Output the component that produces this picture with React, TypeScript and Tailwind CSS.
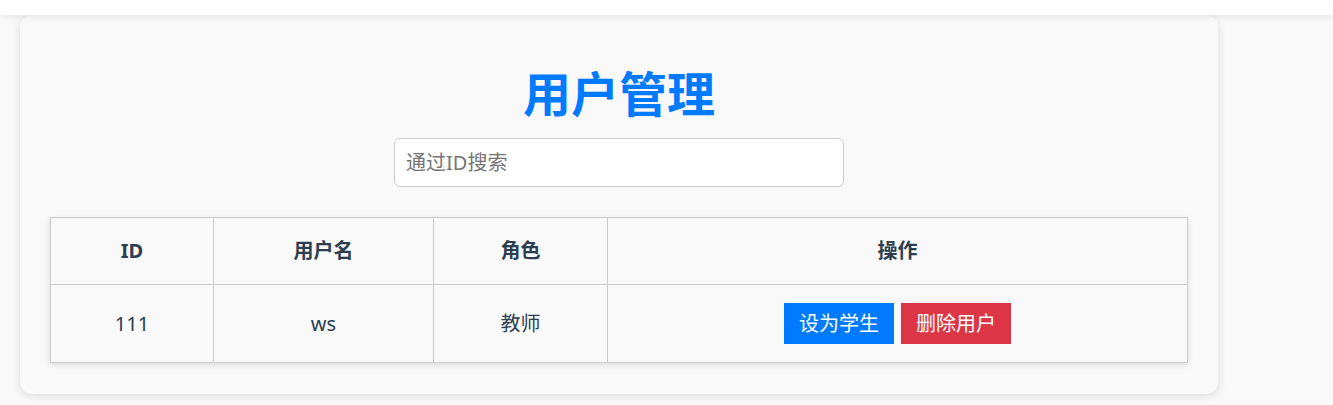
import React from "react";

const users = [{ id: "111", name: "ws", role: "教师" }];

export default function App() {
  return (
    <div
      className="min-h-[405px] bg-[#f9f9f9] text-[#2c3e50]"
      style={{ fontFamily: '"Noto Sans", "Noto Sans CJK SC", sans-serif' }}
    >
      {/* top bar */}
      <div className="relative z-10 h-[15px] bg-white shadow-[0_2px_6px_rgba(0,0,0,0.08)]" />

      {/* card */}
      <div className="ml-[20px] w-[1198px] rounded-[12px] bg-[#f9f9f9] px-[30px] pb-[31px] pt-[51px] shadow-[0_2px_10px_rgba(0,0,0,0.12)]">
        <h1 className="text-center text-[48px] font-bold leading-[56px] text-[#007bff]">
          用户管理
        </h1>

        <div className="mt-[16px] flex justify-center">
          <input
            type="text"
            placeholder="通过ID搜索"
            className="h-[49px] w-[450px] rounded-[6px] border border-[#ccc] bg-white px-[11px] text-[20px] text-[#333] placeholder:text-[#757575] outline-none"
          />
        </div>

        <table className="mt-[30px] w-[1138px] table-fixed border-collapse shadow-[0_2px_6px_rgba(0,0,0,0.12)]">
          <colgroup>
            <col className="w-[163px]" />
            <col className="w-[220px]" />
            <col className="w-[174px]" />
            <col />
          </colgroup>
          <thead>
            <tr className="h-[67px]">
              <th className="border border-[#ccc] text-center text-[20px] font-bold">ID</th>
              <th className="border border-[#ccc] text-center text-[20px] font-bold">用户名</th>
              <th className="border border-[#ccc] text-center text-[20px] font-bold">角色</th>
              <th className="border border-[#ccc] text-center text-[20px] font-bold">操作</th>
            </tr>
          </thead>
          <tbody>
            {users.map((u) => (
              <tr key={u.id} className="h-[78px] text-[20px] text-[#2c3e50]">
                <td className="border border-[#ccc] text-center">{u.id}</td>
                <td className="border border-[#ccc] text-center">{u.name}</td>
                <td className="border border-[#ccc] text-center">{u.role}</td>
                <td className="border border-[#ccc] text-center">
                  <div className="flex items-center justify-center gap-[7px]">
                    <button className="h-[41px] w-[110px] bg-[#007bff] text-[20px] text-white">
                      设为学生
                    </button>
                    <button className="h-[41px] w-[110px] bg-[#dc3545] text-[20px] text-white">
                      删除用户
                    </button>
                  </div>
                </td>
              </tr>
            ))}
          </tbody>
        </table>
      </div>
    </div>
  );
}
